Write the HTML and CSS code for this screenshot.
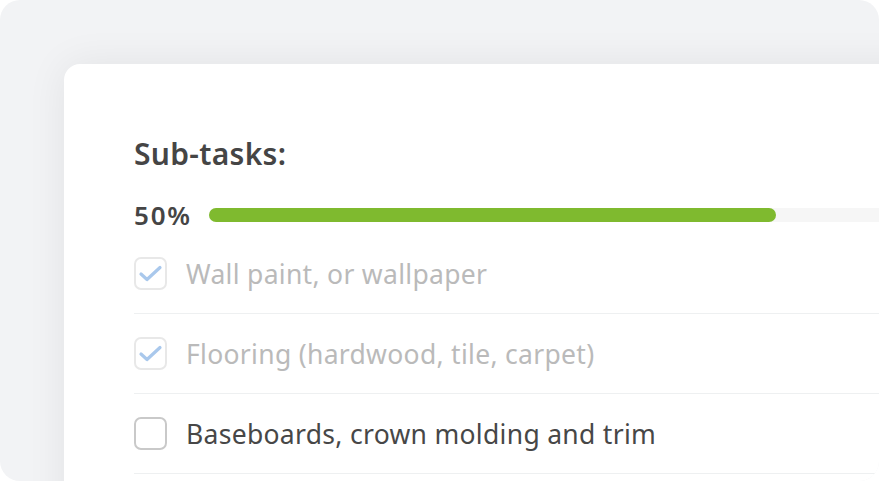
FILE: index.html
```html
<!DOCTYPE html>
<html lang="en">
<head>
<meta charset="utf-8">
<title>Sub-tasks</title>
<link rel="stylesheet" href="styles.css">
</head>
<body>
<div class="frame">
  <div class="card">
    <h2 class="title">Sub-tasks:</h2>
    <div class="progress">
      <span class="pct">50%</span>
      <div class="track"><div class="fill" style="width:50%"></div></div>
    </div>
    <ul class="tasks">
      <li class="task done">
        <span class="box"><svg viewBox="0 0 33 33" width="33" height="33"><path d="M7 17l6 5.5L26 10.5" fill="none" stroke="#a9c8ec" stroke-width="3.2" stroke-linecap="round" stroke-linejoin="round"/></svg></span>
        <span class="label">Wall paint, or wallpaper</span>
      </li>
      <li class="task done">
        <span class="box"><svg viewBox="0 0 33 33" width="33" height="33"><path d="M7 17l6 5.5L26 10.5" fill="none" stroke="#a9c8ec" stroke-width="3.2" stroke-linecap="round" stroke-linejoin="round"/></svg></span>
        <span class="label">Flooring (hardwood, tile, carpet)</span>
      </li>
      <li class="task">
        <span class="box"></span>
        <span class="label">Baseboards, crown molding and trim</span>
      </li>
    </ul>
  </div>
</div>
</body>
</html>
```

FILE: styles.css
```css
html, body {
  margin: 0;
  padding: 0;
  background: #ffffff;
}
body {
  width: 879px;
  height: 481px;
  overflow: hidden;
  font-family: "Noto Sans", "Lato", sans-serif;
}
.frame {
  width: 879px;
  height: 481px;
  background: #f2f3f5;
  border-radius: 20px;
  overflow: hidden;
  padding: 64px 0 0 64px;
  box-sizing: border-box;
}
.card {
  width: 1350px;
  height: 600px;
  background: #ffffff;
  border-radius: 16px;
  box-shadow: 0 0 40px rgba(0, 0, 0, 0.07);
  padding: 70px 70px 0 70px;
  box-sizing: border-box;
}
.title {
  margin: 0;
  font-size: 30px;
  line-height: 40px;
  font-weight: 600;
  letter-spacing: 0.3px;
  color: #454545;
}
.progress {
  display: flex;
  align-items: center;
  gap: 17px;
  height: 30px;
  margin-top: 26px;
}
.pct {
  font-size: 26px;
  font-weight: 600;
  letter-spacing: 1.8px;
  color: #454545;
  line-height: 30px;
}
.track {
  flex: 1;
  height: 14px;
  background: #f6f6f6;
  border-radius: 7px;
}
.fill {
  height: 100%;
  background: #7fba2f;
  border-radius: 7px;
}
.tasks {
  list-style: none;
  margin: 4px 0 0 0;
  padding: 0;
}
.task {
  display: flex;
  align-items: center;
  gap: 19px;
  height: 79px;
  border-bottom: 1px solid #eef0f1;
}
.box {
  width: 33px;
  height: 33px;
  box-sizing: border-box;
  border: 2px solid #c9c9c9;
  border-radius: 7px;
  display: flex;
  align-items: center;
  justify-content: center;
  flex: none;
}
.box svg {
  display: block;
  margin: -2px;
}
.done .box {
  border-color: #e8e8e8;
}
.label {
  font-size: 26.5px;
  letter-spacing: 0.3px;
  color: #474747;
}
.done .label {
  color: #bababa;
}
```
